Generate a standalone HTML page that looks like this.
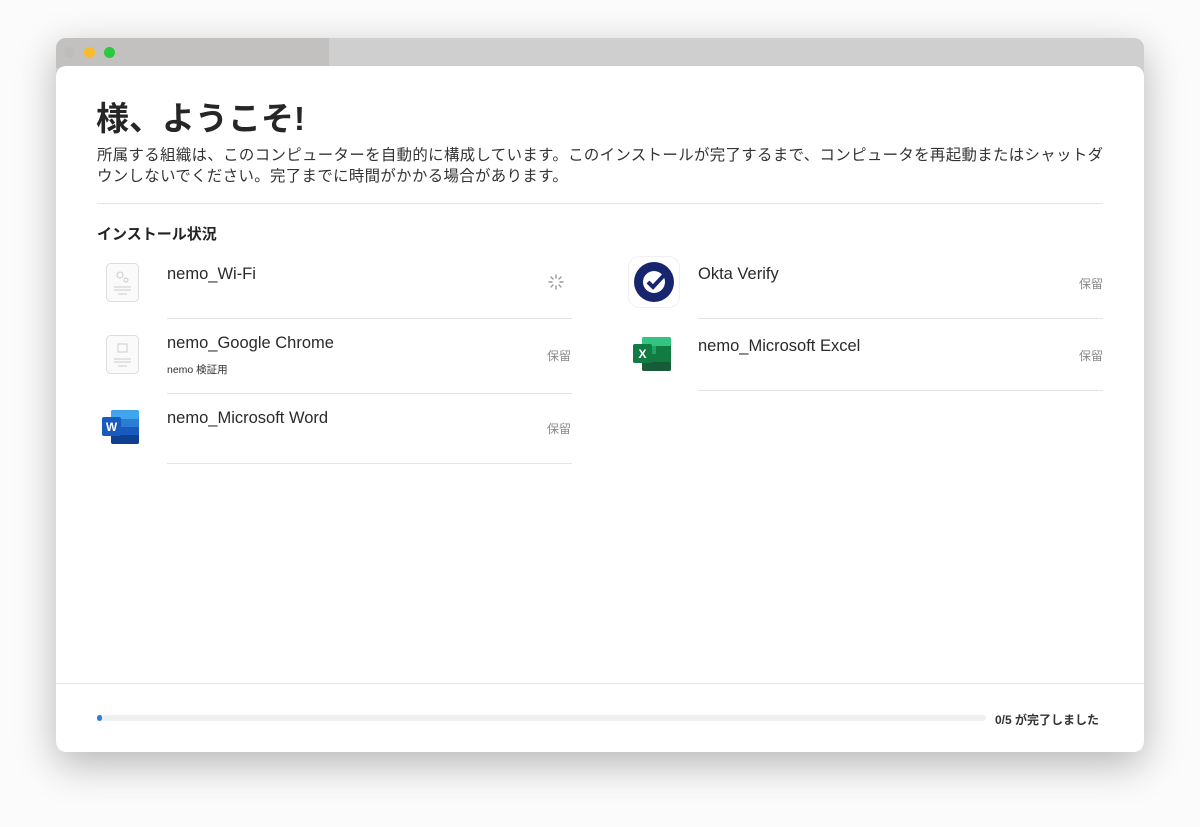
<!DOCTYPE html>
<html><head><meta charset="utf-8"><style>
*{margin:0;padding:0;box-sizing:border-box}
body{width:1200px;height:827px;background:#fbfbfb;font-family:"Liberation Sans","Noto Sans CJK JP",sans-serif;color:#222;position:relative;overflow:hidden}
.win{position:absolute;left:56px;top:38px;width:1088px;height:714px;border-radius:10px;background:#cfcfcf;box-shadow:0 12px 40px rgba(0,0,0,.28);overflow:hidden}
.tb1{position:absolute;left:0;top:0;width:273px;height:30px;background:#c2c1c0}
.dot{position:absolute;top:9px;width:11px;height:11px;border-radius:50%}
.panel{position:absolute;left:0;top:28px;width:1088px;height:686px;background:#fff;border-radius:10px 10px 10px 10px}
.a{position:absolute;white-space:nowrap}
.hr{position:absolute;height:1px;background:#e4e4e4}
.name{font-size:16.5px;color:#2a2a2a}
.st{font-size:12px;color:#888}
</style></head><body>
<div class="win">
 <div class="tb1"></div>
 <div class="dot" style="left:8px;background:#bdbdbd"></div>
 <div class="dot" style="left:28px;background:#f7bb2e"></div>
 <div class="dot" style="left:48px;background:#2bc840"></div>
 <div class="panel"></div>
</div>
<div class="a" style="left:96px;top:92px;font-size:33px;font-weight:bold;color:#262626">様、ようこそ!</div>
<div class="a" style="left:97px;top:145px;font-size:15.4px;line-height:21px;letter-spacing:0.38px;color:#333">所属する組織は、このコンピューターを自動的に構成しています。このインストールが完了するまで、コンピュータを再起動またはシャットダ<br>ウンしないでください。完了までに時間がかかる場合があります。</div>
<div class="hr" style="left:97px;top:203px;width:1006px"></div>
<div class="a" style="left:97px;top:223px;font-size:15px;font-weight:bold;color:#222">インストール状況</div>

<svg class="a" style="left:106px;top:263px" width="33" height="39" viewBox="0 0 33 39"><rect x="0.5" y="0.5" width="32" height="38" rx="4" fill="#fafafa" stroke="#ddd"/><circle cx="14" cy="12" r="3" fill="none" stroke="#ccc"/><circle cx="20" cy="17" r="2" fill="none" stroke="#ccc"/><path d="M8 24h17M8 27h17M12 31h9" stroke="#ccc"/></svg>
<div class="a name" style="left:167px;top:265px">nemo_Wi-Fi</div>
<svg class="a" style="left:548px;top:274px" width="16" height="16" viewBox="0 0 16 16"><g stroke="#999" stroke-width="1.4" stroke-linecap="round"><path d="M8 1v3M8 12v3M1 8h3M12 8h3M3 3l2 2M11 11l2 2M3 13l2-2M11 5l2-2"/></g></svg>
<div class="hr" style="left:167px;top:318px;width:405px"></div>

<svg class="a" style="left:106px;top:335px" width="33" height="39" viewBox="0 0 33 39"><rect x="0.5" y="0.5" width="32" height="38" rx="4" fill="#fafafa" stroke="#ddd"/><rect x="12" y="9" width="9" height="8" fill="none" stroke="#ccc"/><path d="M8 24h17M8 27h17M12 31h9" stroke="#ccc"/></svg>
<div class="a name" style="left:167px;top:334px">nemo_Google Chrome</div>
<div class="a" style="left:167px;top:362px;font-size:10.5px;color:#333">nemo 検証用</div>
<div class="a st" style="left:547px;top:347px">保留</div>
<div class="hr" style="left:167px;top:393px;width:405px"></div>

<svg class="a" style="left:102px;top:410px" width="37" height="34" viewBox="0 0 37 34"><rect x="9" y="0" width="28" height="34" rx="2" fill="#2b7cd3"/><rect x="9" y="0" width="28" height="9" rx="2" fill="#41a5ee"/><rect x="9" y="17" width="28" height="9" fill="#185abd"/><rect x="9" y="25" width="28" height="9" rx="2" fill="#103f91"/><rect x="0" y="7" width="19" height="19" rx="2" fill="#185abd"/><text x="9.5" y="21" font-size="12" font-weight="bold" fill="#fff" text-anchor="middle" font-family="Liberation Sans">W</text></svg>
<div class="a name" style="left:167px;top:409px">nemo_Microsoft Word</div>
<div class="a st" style="left:547px;top:420px">保留</div>
<div class="hr" style="left:167px;top:463px;width:405px"></div>

<svg class="a" style="left:628px;top:256px" width="52" height="52" viewBox="0 0 52 52"><rect x="0.5" y="0.5" width="51" height="51" rx="11" fill="#fff" stroke="#f0f0f0"/><circle cx="26" cy="26" r="20" fill="#16256e"/><circle cx="26" cy="26" r="11" fill="#fff"/><path d="M20 26l5 5 14-15" fill="none" stroke="#16256e" stroke-width="4"/></svg>
<div class="a name" style="left:698px;top:265px">Okta Verify</div>
<div class="a st" style="left:1079px;top:275px">保留</div>
<div class="hr" style="left:698px;top:318px;width:405px"></div>

<svg class="a" style="left:633px;top:337px" width="38" height="34" viewBox="0 0 38 34"><rect x="9" y="0" width="29" height="34" rx="2" fill="#21a366"/><rect x="9" y="0" width="29" height="9" rx="2" fill="#33c481"/><rect x="23" y="9" width="15" height="8" fill="#107c41"/><rect x="9" y="17" width="29" height="9" fill="#107c41"/><rect x="9" y="25" width="29" height="9" rx="2" fill="#185c37"/><rect x="0" y="7" width="19" height="19" rx="2" fill="#107c41"/><text x="9.5" y="21" font-size="12" font-weight="bold" fill="#fff" text-anchor="middle" font-family="Liberation Sans">X</text></svg>
<div class="a name" style="left:698px;top:337px">nemo_Microsoft Excel</div>
<div class="a st" style="left:1079px;top:347px">保留</div>
<div class="hr" style="left:698px;top:390px;width:405px"></div>

<div class="hr" style="left:56px;top:683px;width:1088px;background:#e8e8e8"></div>
<div class="a" style="left:97px;top:715px;width:889px;height:6px;border-radius:3px;background:#efefef"></div>
<div class="a" style="left:97px;top:715px;width:5px;height:6px;border-radius:3px;background:#2a7de1"></div>
<div class="a" style="left:995px;top:711px;font-size:12px;font-weight:bold;color:#333">0/5 が完了しました</div>
</body></html>
